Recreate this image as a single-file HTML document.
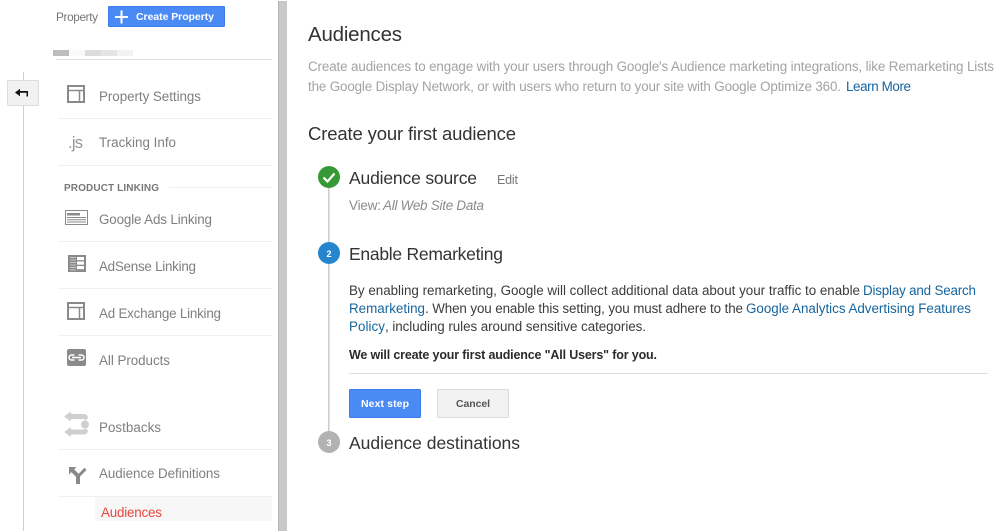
<!DOCTYPE html>
<html>
<head>
<meta charset="utf-8">
<style>
html,body{margin:0;padding:0;background:#fff;width:994px;height:531px;overflow:hidden}
svg{display:block}
text{font-family:"Liberation Sans",sans-serif;white-space:pre}
.n{font-size:13.4px;fill:#7f7f7f}
.b{font-size:13.4px;fill:#3c3c3c}
.g{font-size:13.4px;fill:#a3a3a3}
.l{font-size:13.4px;fill:#15659f}
.h{font-size:17.500px;fill:#333}
</style>
</head>
<body>
<svg width="994" height="531" viewBox="0 0 994 531" xmlns="http://www.w3.org/2000/svg">
<rect width="994" height="531" fill="#fff"/>

<!-- vertical separators -->
<rect x="23" y="72" width="1" height="459" fill="#cfcfcf"/>
<rect x="278" y="1" width="9" height="530" fill="#c9c9c9"/>
<rect x="278" y="1" width="1" height="530" fill="#b5b5b5"/>

<!-- back button -->
<rect x="7.500" y="80.500" width="31" height="25" rx="1" fill="#f1f1f1" stroke="#dcdcdc"/>
<path d="M15 92.500 L20 88.800 V91 H28 V96.500 H26.500 V92.800 H20 V96.200 Z" fill="#111"/>

<!-- top -->
<text x="56" y="21" style="font-size:11.800px;fill:#777" textLength="42">Property</text>
<rect x="108" y="6" width="117" height="21" rx="1.500" fill="#4a8af4"/>
<rect x="108.500" y="6.500" width="116" height="20" rx="1.500" fill="none" stroke="#3f7de6"/>
<path d="M121.500 10.500V23.500M115 17H128" stroke="#fff" stroke-width="2" fill="none"/>
<text x="136" y="20" style="font-size:10.500px;font-weight:bold;fill:#fff" textLength="78">Create Property</text>
<rect x="53" y="50" width="16" height="6" fill="#bdbdbd"/>
<rect x="69" y="50" width="16" height="6" fill="#fafafa"/>
<rect x="85" y="50" width="16" height="6" fill="#dcdcdc"/>
<rect x="101" y="50" width="16" height="6" fill="#e4e4e4"/>
<rect x="117" y="50" width="16" height="6" fill="#f2f2f2"/>
<rect x="56" y="59" width="216" height="1" fill="#dedede"/>

<!-- sidebar dividers -->
<g fill="#f0f0f0">
<rect x="58" y="118" width="214" height="1"/>
<rect x="58" y="165" width="214" height="1"/>
<rect x="169" y="187" width="103" height="1"/>
<rect x="58" y="241" width="214" height="1"/>
<rect x="58" y="288" width="214" height="1"/>
<rect x="58" y="335" width="214" height="1"/>
<rect x="58" y="449" width="214" height="1"/>
<rect x="58" y="496" width="214" height="1"/>
</g>

<!-- sidebar labels -->
<text x="99" y="101" class="n" textLength="102">Property Settings</text>
<text x="99" y="147" class="n" textLength="77">Tracking Info</text>
<text x="64" y="191" style="font-size:10px;font-weight:bold;fill:#777" textLength="95">PRODUCT LINKING</text>
<text x="99" y="224" class="n" textLength="113">Google Ads Linking</text>
<text x="99" y="271" class="n" textLength="97">AdSense Linking</text>
<text x="99" y="318" class="n" textLength="122">Ad Exchange Linking</text>
<text x="99" y="365" class="n" textLength="71">All Products</text>
<text x="99" y="432" class="n" textLength="62">Postbacks</text>
<text x="99" y="478" class="n" textLength="121">Audience Definitions</text>
<rect x="95" y="497" width="177" height="24" fill="#f7f7f7"/>
<text x="101" y="517" style="font-size:13.4px;fill:#e8453c" textLength="61">Audiences</text>

<!-- sidebar icons -->
<g fill="none" stroke="#8a8a8a" stroke-width="2">
<rect x="68" y="86" width="16" height="16"/>
<path d="M68 90.500H84M79.500 90.500V102" stroke-width="1.500"/>
<rect x="68" y="303" width="16" height="16"/>
<path d="M68 307.500H84M79.500 307.500V319" stroke-width="1.500"/>
</g>
<text x="68" y="148" style="font-size:16.500px;fill:#969696" textLength="15">.js</text>

<rect x="65.500" y="210.500" width="22" height="14" fill="none" stroke="#8a8a8a"/>
<rect x="67" y="213" width="13" height="2.500" fill="#8a8a8a"/>
<path d="M67 217.500H86M67 219.700H86M67 222H86" stroke="#8a8a8a" stroke-width="1"/>

<rect x="68" y="255" width="18" height="17" fill="#8a8a8a"/>
<g fill="#fff">
<rect x="77" y="257" width="7" height="3.200"/>
<rect x="77" y="261.500" width="7" height="3.200"/>
<rect x="77" y="266" width="7" height="3.200"/>
</g>
<g fill="#c8c8c8">
<rect x="70" y="257" width="6" height="1"/>
<rect x="70" y="259.500" width="6" height="1"/>
<rect x="70" y="262" width="6" height="1"/>
<rect x="70" y="264.500" width="6" height="1"/>
<rect x="70" y="267" width="6" height="1"/>
<rect x="70" y="269.500" width="6" height="1"/>
</g>

<rect x="67" y="349" width="19" height="17" rx="2" fill="#8a8a8a"/>
<path d="M74.500 355H71.500A2.500 2.500 0 0 0 71.500 360H74.500M78.500 355H81.500A2.500 2.500 0 0 1 81.500 360H78.500M72 357.500H81" stroke="#fff" stroke-width="1.500" fill="none"/>

<g fill="#cfcfcf">
<path d="M64 416.500L71 411.500V414H85V419H71V421.500Z"/>
<path d="M64 432L71 427V429.500H85V434.500H71V437Z"/>
<circle cx="85" cy="424.500" r="4"/>
<path d="M84 414A4 4 0 0 1 88 418L85 421ZM84 434.500A4 4 0 0 0 88 430.500L85 428Z"/>
</g>

<path d="M69 467H76.500L69 474.500Z" fill="#8a8a8a"/>
<path d="M72 470L78 476V484" stroke="#8a8a8a" stroke-width="4" fill="none"/>
<path d="M78.500 476L85.500 468.800" stroke="#8a8a8a" stroke-width="3" fill="none"/>

<!-- main head -->
<text x="308" y="41" style="font-size:20.500px;fill:#333" textLength="94">Audiences</text>
<text x="308" y="71" class="g" textLength="686">Create audiences to engage with your users through Google's Audience marketing integrations, like Remarketing Lists</text>
<text x="308" y="91" class="g" textLength="533">the Google Display Network, or with users who return to your site with Google Optimize 360.</text>
<text x="846" y="91" class="l" textLength="65">Learn More</text>
<text x="308" y="140" style="font-size:18.500px;fill:#333" textLength="208">Create your first audience</text>

<!-- steps -->
<rect x="328" y="186" width="1.500" height="246" fill="#cccccc"/>
<circle cx="329" cy="177" r="11" fill="#359a35"/>
<path d="M323.500 177.500L327.500 181.500L334.500 173.500" stroke="#fff" stroke-width="2.200" fill="none"/>
<text x="349" y="184" class="h" textLength="128">Audience source</text>
<text x="497" y="184" style="font-size:12.500px;fill:#777" textLength="21">Edit</text>
<text x="349" y="210" class="n" style="fill:#8a8a8a" textLength="32">View:</text>
<text x="383" y="210" class="n" style="fill:#8a8a8a;font-style:italic" textLength="101">All Web Site Data</text>

<circle cx="329" cy="253" r="11" fill="#2585cf"/>
<text x="329" y="257" text-anchor="middle" style="font-size:9px;font-weight:bold;fill:#fff">2</text>
<text x="349" y="260" class="h" textLength="154">Enable Remarketing</text>

<text x="349" y="295" class="b" textLength="511">By enabling remarketing, Google will collect additional data about your traffic to enable</text>
<text x="863" y="295" class="l" textLength="113">Display and Search</text>
<text x="349" y="313" class="l" textLength="76">Remarketing</text>
<text x="425" y="313" class="b" textLength="318">. When you enable this setting, you must adhere to the</text>
<text x="746" y="313" class="l" textLength="225">Google Analytics Advertising Features</text>
<text x="349" y="331" class="l" textLength="36">Policy</text>
<text x="385" y="331" class="b" textLength="261">, including rules around sensitive categories.</text>
<text x="349" y="359" style="font-size:12.500px;font-weight:bold;fill:#2b2b2b" textLength="308">We will create your first audience "All Users" for you.</text>
<rect x="349" y="373" width="639" height="1" fill="#dedede"/>

<rect x="349.500" y="389.500" width="71" height="28" rx="1" fill="#4a8af4" stroke="#3f7de6"/>
<text x="361" y="407" style="font-size:10.500px;font-weight:bold;fill:#fff" textLength="48">Next step</text>
<rect x="437.500" y="389.500" width="71" height="28" rx="1" fill="#f2f2f2" stroke="#dcdcdc"/>
<text x="456" y="407" style="font-size:10.500px;font-weight:bold;fill:#555" textLength="34">Cancel</text>

<circle cx="329" cy="442" r="11" fill="#b2b2b2"/>
<text x="329" y="446" text-anchor="middle" style="font-size:9px;font-weight:bold;fill:#fff">3</text>
<text x="349" y="449" class="h" textLength="171">Audience destinations</text>
</svg>
</body>
</html>
